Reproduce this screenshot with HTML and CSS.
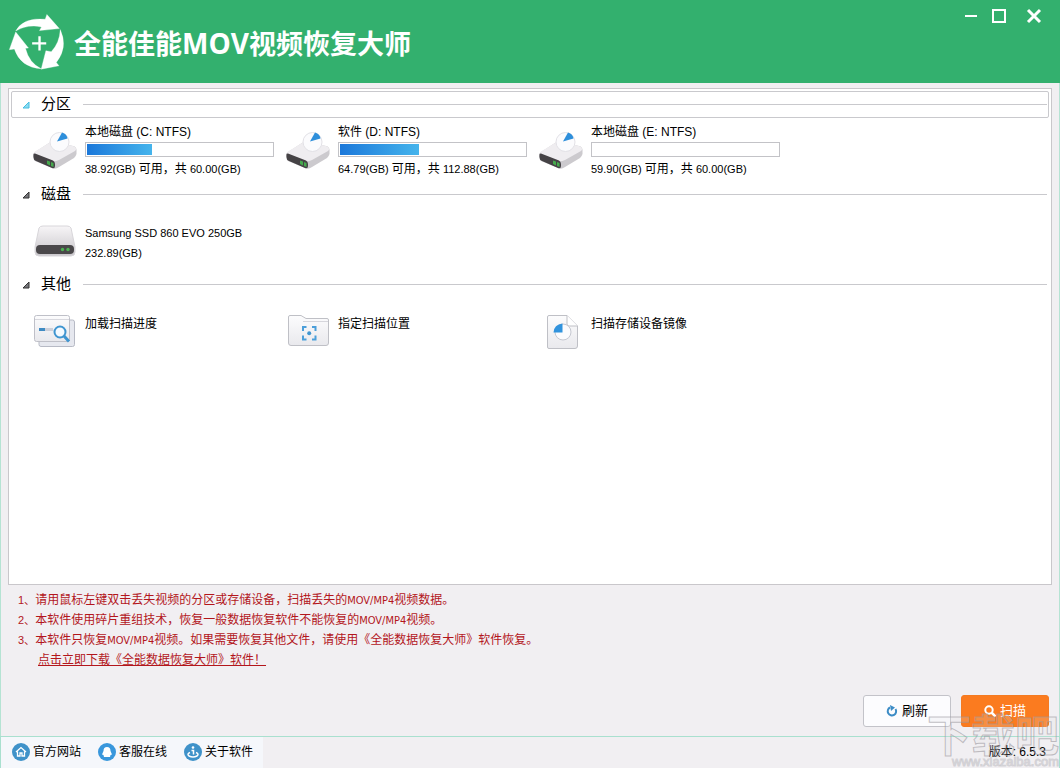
FILE: index.html
```
<!DOCTYPE html>
<html lang="zh-CN">
<head>
<meta charset="utf-8">
<title>全能佳能MOV视频恢复大师</title>
<link rel="stylesheet" href="styles.css">
</head>
<body>
<svg class="defs" aria-hidden="true">
  <defs>
    <linearGradient id="metal" x1="0" y1="0" x2="0" y2="1"><stop offset="0" stop-color="#f7f5f7"/><stop offset="1" stop-color="#c9c7cb"/></linearGradient>
    <linearGradient id="paper" x1="0" y1="0" x2="0" y2="1"><stop offset="0" stop-color="#fcfcfd"/><stop offset="1" stop-color="#e9e9ed"/></linearGradient>
    <symbol id="drive" viewBox="0 0 44 38">
      <path d="M2 21 16 12Q19 10 23 11L40 15Q44 16 43.500 20V23Q43 25 41 27L26 36Q22 39 19 37L2 30Q0 28 0 26V23Z" fill="#cccace"/>
      <path d="M2 20.500 16 12Q19 10 23 11L40 15Q45 17 42 20L26 29Q22 31 19 30L2 24Q0 22 2 20.500Z" fill="#efedf0"/>
      <path d="M2 22.500 20 29.500Q22 30.500 22 33V35Q22 38 19 37L3 30Q0.500 29 0.500 26V24Q0.500 22 2 22.500Z" fill="#454245"/>
      <path d="M14 29.500 17 30.500V34.500L14 33ZM18 31 20.500 32V36L18 35Z" fill="#45a94d"/>
      <circle cx="26.500" cy="11" r="9.500" fill="#fbfbfd" stroke="#e2e1e6"/>
      <path d="M24 10.500 29 1.500Q34 3 34.500 7.500Z" fill="#2e8fdb"/>
    </symbol>
  </defs>
</svg>
<div class="window">
  <header class="titlebar">
    <svg class="logo" viewBox="26 42 164 166" aria-hidden="true">
      <g fill="#fff" stroke="#fff" stroke-linejoin="round">
        <path d="M46 92Q68 51 134 57L139 43 176 85 117 91 123 80Q82 71 46 92Z"/>
        <path d="M179 88Q177 128 152 154L136 151 122 206 175 196 167 186Q203 142 179 88Z"/>
        <path d="M46 95 27 148 42 146Q60 201 122 205 86 188 75 144L84 143Z"/>
      </g>
      <path d="M95 129H137M117 108V150" fill="none" stroke="#fff" stroke-width="7"/>
    </svg>
    <h1 class="title">全能佳能<span class="title-latin">MOV</span>视频恢复大师</h1>
    <div class="controls">
      <button class="control" type="button" aria-label="最小化"><svg viewBox="0 0 16 16"><path d="M2 8H14" stroke-width="2"/></svg></button>
      <button class="control" type="button" aria-label="最大化"><svg viewBox="0 0 16 16"><path d="M2 2H14V14H2Z" stroke-width="2"/></svg></button>
      <button class="control control-close" type="button" aria-label="关闭"><svg viewBox="0 0 16 16"><path d="M2 2 14 14M14 2 2 14" stroke-width="3"/></svg></button>
    </div>
  </header>

  <main class="content">
    <div class="panel">
      <details class="group" open>
        <summary class="group-head active"><svg class="tri" viewBox="0 0 8 8" aria-hidden="true"><path d="M7 1V7H1Z"/></svg><span class="group-name">分区</span><span class="rule"></span></summary>
        <div class="items">
          <button class="item" type="button">
            <svg class="icon" viewBox="0 0 44 38" aria-hidden="true"><use href="#drive"/></svg>
            <span class="text"><span class="name">本地磁盘 (C: NTFS)</span><progress class="bar" max="60" value="21.08" aria-label="C"></progress><span class="size">38.92(GB) <span class="cn">可用，共</span> 60.00(GB)</span></span>
          </button>
          <button class="item" type="button">
            <svg class="icon" viewBox="0 0 44 38" aria-hidden="true"><use href="#drive"/></svg>
            <span class="text"><span class="name">软件 (D: NTFS)</span><progress class="bar" max="112.88" value="48.09" aria-label="D"></progress><span class="size">64.79(GB) <span class="cn">可用，共</span> 112.88(GB)</span></span>
          </button>
          <button class="item" type="button">
            <svg class="icon" viewBox="0 0 44 38" aria-hidden="true"><use href="#drive"/></svg>
            <span class="text"><span class="name">本地磁盘 (E: NTFS)</span><progress class="bar" max="60" value="0.1" aria-label="E"></progress><span class="size">59.90(GB) <span class="cn">可用，共</span> 60.00(GB)</span></span>
          </button>
        </div>
      </details>

      <details class="group" open>
        <summary class="group-head"><svg class="tri" viewBox="0 0 8 8" aria-hidden="true"><path d="M7 1V7H1Z"/></svg><span class="group-name">磁盘</span><span class="rule"></span></summary>
        <div class="items spaced">
          <button class="item" type="button">
            <svg class="icon icon-flat" viewBox="0 0 44 34" aria-hidden="true">
              <path d="M6 3Q7 1 10 1H34Q37 1 38 3L42 22V27Q42 31 38 31H6Q2 31 2 27V22Z" fill="url(#metal)" stroke="#d8d6da"/>
              <rect x="3" y="20" width="38" height="9" rx="4" fill="#4a484a"/>
              <circle cx="29.500" cy="24.500" r="1.700" fill="#4cb352"/><circle cx="35" cy="24.500" r="1.700" fill="#4cb352"/>
            </svg>
            <span class="text disk"><span class="size">Samsung SSD 860 EVO 250GB</span><span class="size">232.89(GB)</span></span>
          </button>
        </div>
      </details>

      <details class="group" open>
        <summary class="group-head"><svg class="tri" viewBox="0 0 8 8" aria-hidden="true"><path d="M7 1V7H1Z"/></svg><span class="group-name">其他</span><span class="rule"></span></summary>
        <div class="items spaced">
          <button class="item" type="button">
            <svg class="icon icon-flat" viewBox="0 0 44 34" aria-hidden="true">
              <rect x="6" y="5" width="35.500" height="26.500" rx="2" fill="#e6e8ef" stroke="#b7bac5"/>
              <rect x="1.500" y=".5" width="35" height="26" rx="2" fill="url(#paper)" stroke="#bfc0c8"/>
              <path d="M2 4.500H36" stroke="#d8d8de"/>
              <path d="M12 14.500H20" stroke="#cdd0da" stroke-width="3"/><path d="M6 14.500H12" stroke="#3f8bc3" stroke-width="3"/>
              <circle cx="27" cy="17" r="5.500" fill="#f4faff" stroke="#3f95d0" stroke-width="2"/>
              <path d="M31 21 36 26.500" stroke="#3f95d0" stroke-width="3"/>
            </svg>
            <span class="text"><span class="name">加载扫描进度</span></span>
          </button>
          <button class="item" type="button">
            <svg class="icon icon-flat" viewBox="0 0 44 34" aria-hidden="true">
              <path d="M2.500 2Q2.500 .5 4 .5H15L20 3.500H41Q42.500 3.500 42.500 5V28Q42.500 30.500 40 30.500H5Q2.500 30.500 2.500 28Z" fill="url(#paper)" stroke="#bfc0c6"/>
              <path d="M17 6.500H42" stroke="#d6d6dc"/>
              <path d="M17 16V12H20.500M26 12H29.500V16M29.500 20.500V24.500H26M20.500 24.500H17V20.500" fill="none" stroke="#4b9fda" stroke-width="2"/>
              <circle cx="23.200" cy="18.200" r="2" fill="#3f95d0"/>
            </svg>
            <span class="text"><span class="name">指定扫描位置</span></span>
          </button>
          <button class="item" type="button">
            <svg class="icon icon-flat" viewBox="0 0 44 36" aria-hidden="true">
              <path d="M10 .5H28L38.500 11V31Q38.500 33.500 36 33.500H10Q8.500 33.500 8.500 32V2Q8.500.5 10 .5Z" fill="url(#paper)" stroke="#bfc0c6"/>
              <path d="M28 .5V9Q28 11 30 11H38.500" fill="#fff" stroke="#bfc0c6"/>
              <circle cx="24" cy="17" r="8" fill="#fbfbfd" stroke="#c5c7d0"/>
              <path d="M23.500 17.500V8.500Q15 9.500 14.500 17.500Z" fill="#3193dd"/>
            </svg>
            <span class="text"><span class="name">扫描存储设备镜像</span></span>
          </button>
        </div>
      </details>
    </div>

    <div class="notes">
      <p><span class="num">1、</span>请用鼠标左键双击丢失视频的分区或存储设备，扫描丢失的<span class="latin">MOV/MP4</span>视频数据。</p>
      <p><span class="num">2、</span>本软件使用碎片重组技术，恢复一般数据恢复软件不能恢复的<span class="latin">MOV/MP4</span>视频。</p>
      <p><span class="num">3、</span>本软件只恢复<span class="latin">MOV/MP4</span>视频。如果需要恢复其他文件，请使用《全能数据恢复大师》软件恢复。</p>
      <p class="download"><a href="#">点击立即下载《全能数据恢复大师》软件！</a></p>
    </div>

    <div class="actions">
      <button class="btn" type="button"><svg class="btn-icon" viewBox="0 0 12 12" aria-hidden="true"><path d="M4 2.500A4.200 4.200 0 1 0 9.500 4" fill="none" stroke="#3c8cc6" stroke-width="2"/><path d="M4 0 9 2.500 5 6Z" fill="#3c8cc6"/></svg>刷新</button>
      <button class="btn btn-primary" type="button"><svg class="btn-icon" viewBox="0 0 12 12" aria-hidden="true"><circle cx="5" cy="5" r="3.700" fill="none" stroke="#fff" stroke-width="2"/><path d="M7.500 7.500 11.500 11.500" stroke="#fff" stroke-width="2.500"/></svg>扫描</button>
    </div>
  </main>

  <footer class="footer">
    <nav class="links">
      <a class="link" href="#"><svg viewBox="0 0 18 18" aria-hidden="true"><circle cx="9" cy="9" r="9" fill="#3f92c9"/><path d="M4 9 9 4.500 14 9M5.500 8.500V13H8V10H10V13H12.500V8.500" fill="none" stroke="#fff" stroke-width="1.300"/></svg>官方网站</a>
      <a class="link" href="#"><svg viewBox="0 0 18 18" aria-hidden="true"><circle cx="9" cy="9" r="9" fill="#3997dc"/><path d="M9 4Q12.500 4 12.500 8L14 11.500 12.500 12 12 14H6L5.500 12 4 11.500 5.500 8Q5.500 4 9 4Z" fill="#fff"/></svg>客服在线</a>
      <a class="link" href="#"><svg viewBox="0 0 18 18" aria-hidden="true"><circle cx="9" cy="9" r="9" fill="#3f92c9"/><circle cx="9" cy="4.500" r="1.300" fill="#fff"/><path d="M7.500 7.500H9.500V11.500M6 9.500Q2.500 11 5 13 9 15 13 13 15.500 11 12 9.500" fill="none" stroke="#fff" stroke-width="1.500"/></svg>关于软件</a>
    </nav>
    <span class="version">版本: 6.5.3</span>
  </footer>
  <div class="watermark"><span class="mark">下载吧</span><span class="mark-url">www.xiazaiba.com</span></div>
</div>
</body>
</html>
```
FILE: styles.css
```
* { box-sizing: border-box; }

body {
  margin: 0;
  font-family: "Liberation Sans", "Noto Sans CJK SC", sans-serif;
  font-size: 12px;
  line-height: 16px;
  color: #000;
}

button {
  font: inherit;
  color: inherit;
  cursor: pointer;
}

.defs {
  position: absolute;
  width: 0;
  height: 0;
}

.window {
  position: relative;
  display: flex;
  flex-direction: column;
  min-height: 100vh;
  overflow: hidden;
  background: #f1eff2;
}

.titlebar {
  display: flex;
  align-items: center;
  height: 83px;
  padding-left: 9px;
  background: #33b06e;
}

.logo {
  width: 55px;
  height: 56px;
}

.title {
  flex: 1;
  margin: 0 0 0 10px;
  padding-top: 2px;
  font-family: "Noto Sans CJK SC", sans-serif;
  font-size: 27px;
  line-height: 40px;
  font-weight: 700;
  color: #fff;
}

.title-latin {
  font-family: "Open Sans", sans-serif;
  font-size: 28px;
  line-height: 28px;
}

.controls {
  display: flex;
  align-self: flex-start;
  gap: 12px;
  padding: 8px 18px 0 0;
}

.control {
  width: 16px;
  height: 16px;
  padding: 0;
  border: 0;
  background: none;
}

.control-close { margin-left: 7px; }

.control svg {
  display: block;
  fill: none;
  stroke: #fff;
}

.content {
  flex: 1;
  display: flex;
  flex-direction: column;
  padding: 5px 7px 9px;
  border: solid #b5e3d3;
  border-width: 0 1px;
}

.panel {
  flex: 1;
  padding: 2px;
  border: 1px solid #c9c7cb;
  background: #fff;
}

.group { min-height: 90px; }

.group-head {
  display: flex;
  align-items: center;
  height: 27px;
  padding: 0 1px 0 10px;
  border: 1px solid transparent;
  font-size: 15px;
  line-height: 20px;
  list-style: none;
  cursor: pointer;
}

.active { border-color: #c9c9cd; border-radius: 2px; }

.group-name { padding-bottom: 2px; }

.tri {
  width: 8px;
  height: 8px;
  margin-right: 11px;
  fill: #77777b;
  stroke: #333;
}

.active .tri { fill: #8bdcf1; stroke: #45bde0; }

.rule {
  flex: 1;
  height: 1px;
  margin-left: 12px;
  background: #c9c9cd;
}

.items {
  display: grid;
  grid-template-columns: repeat(auto-fill, 253px);
  padding: 5px 0 0 22px;
}

.spaced { padding-top: 17px; }

.item {
  display: flex;
  align-items: flex-start;
  gap: 8px;
  padding: 0;
  border: 0;
  background: none;
  text-align: left;
  white-space: nowrap;
}

.icon {
  flex: none;
  width: 44px;
  height: 38px;
  margin-top: 8px;
}

.icon-flat { height: auto; margin-top: 0; }

.text {
  display: flex;
  flex-direction: column;
}

.disk { gap: 4px; }

.name { padding-top: 1px; }

.size { font-size: 11px; }

.cn { font-size: 12px; line-height: 12px; }

.bar {
  appearance: none;
  width: 189px;
  height: 15px;
  margin: 2px 0 4px;
  padding: 1px;
  border: 1px solid #c3c3c7;
  background: #fff;
}

.bar::-webkit-progress-bar { background: #fff; }

.bar::-webkit-progress-value { background: linear-gradient(90deg, #1b78da, #45b4ec); }

.notes {
  padding: 5px 0 0 10px;
  line-height: 20px;
  color: #b3161c;
}

.notes p { margin: 0; }

.num,
.latin {
  font-size: 11px;
  line-height: 11px;
}

.latin { font-family: "DejaVu Sans Condensed", "Open Sans", sans-serif; }

.notes .download { padding-left: 20px; }

.notes a { color: inherit; }

.actions {
  display: flex;
  justify-content: flex-end;
  gap: 10px;
  padding: 25px 3px 0 0;
}

.btn {
  display: flex;
  align-items: center;
  justify-content: center;
  gap: 4px;
  width: 88px;
  height: 32px;
  padding: 0;
  border: 1px solid #c3c3c9;
  border-radius: 3px;
  background: #fcfcfe;
  font-size: 13px;
}

.btn-primary {
  border-color: #f47a21;
  background: #fb7b1f;
  color: #fff;
}

.btn-icon {
  width: 12px;
  height: 12px;
}

.footer {
  display: flex;
  align-items: stretch;
  justify-content: space-between;
  height: 32px;
  border: solid #a9e0cf;
  border-width: 1px 1px 0;
}

.links {
  display: flex;
  gap: 17px;
  padding: 0 10px 2px 11px;
  background: #f5f7fb;
}

.link {
  display: flex;
  align-items: center;
  gap: 3px;
  color: inherit;
  text-decoration: none;
}

.link svg {
  width: 18px;
  height: 18px;
}

.version {
  align-self: center;
  padding: 0 13px 2px 0;
}

.watermark {
  position: absolute;
  right: 1px;
  bottom: 0;
  display: flex;
  flex-direction: column;
  align-items: flex-end;
  pointer-events: none;
}

.mark {
  font-family: "Noto Sans CJK SC", sans-serif;
  font-size: 44px;
  line-height: 44px;
  font-weight: 700;
  color: rgba(225, 225, 228, 0.2);
  -webkit-text-stroke: 1px rgba(155, 152, 158, 0.6);
}

.mark-url {
  font-size: 13px;
  line-height: 13px;
  color: rgba(240, 240, 242, 0.6);
  -webkit-text-stroke: 1px rgba(165, 162, 168, 0.4);
}
```
